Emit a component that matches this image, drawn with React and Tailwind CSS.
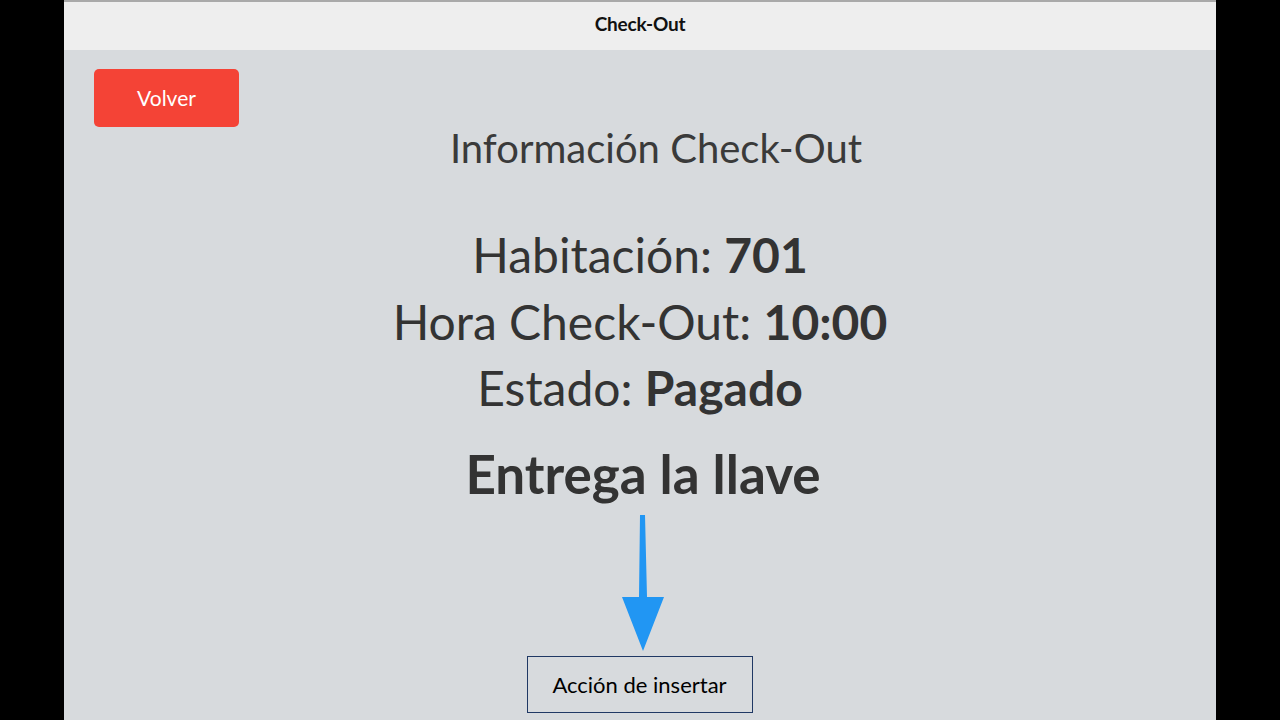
export default function App() {
  return (
    <div className="w-[1280px] h-[720px] bg-black flex justify-center overflow-hidden">
      <div className="w-[1152px] h-[720px] flex flex-col bg-[#d7dadd] font-['Lato','Open_Sans',sans-serif]">
        <div className="h-[50px] shrink-0 bg-[#eeeeee] border-t-2 border-[#a9a9a9] flex items-center justify-center pb-[3px]">
          <span className="text-[19px] font-bold text-[#111] tracking-[-0.2px]">Check-Out</span>
        </div>
        <div className="flex flex-col">
          <div className="pl-[30px] pt-[19px]">
            <button className="w-[145px] h-[58px] rounded-[5px] bg-[#f44336] text-white text-[21px] flex items-center justify-center">
              Volver
            </button>
          </div>
          <div className="-mt-[3px] pl-[32px] text-center text-[40px] leading-[48px] text-[#3a3a3a]">
            Información Check-Out
          </div>
          <div className="mt-[50px] flex flex-col items-center text-[48px] leading-[66.5px] text-[#333]">
            <div>Habitación: <span className="font-bold">701</span></div>
            <div>Hora Check-Out: <span className="font-bold">10:00</span></div>
            <div>Estado: <span className="font-bold">Pagado</span></div>
          </div>
          <div className="mt-[24px] text-center pl-[6px] text-[53px] leading-[56px] font-bold text-[#333]">
            Entrega la llave
          </div>
          <div className="mt-[13px] flex justify-center pl-[6px]">
            <svg width="46" height="138" viewBox="0 0 46 138">
              <path d="M20 0 L25 0 L27 82 L44 82 L23 136 L2 82 L19 82 Z" fill="#2196f3" />
            </svg>
          </div>
          <div className="mt-[3px] flex justify-center">
            <div className="ml-[-1px] w-[226px] h-[57px] border border-[#1f3864] flex items-center justify-center text-[22px] text-black font-['Lato',sans-serif]">
              Acción de insertar
            </div>
          </div>
        </div>
      </div>
    </div>
  );
}
